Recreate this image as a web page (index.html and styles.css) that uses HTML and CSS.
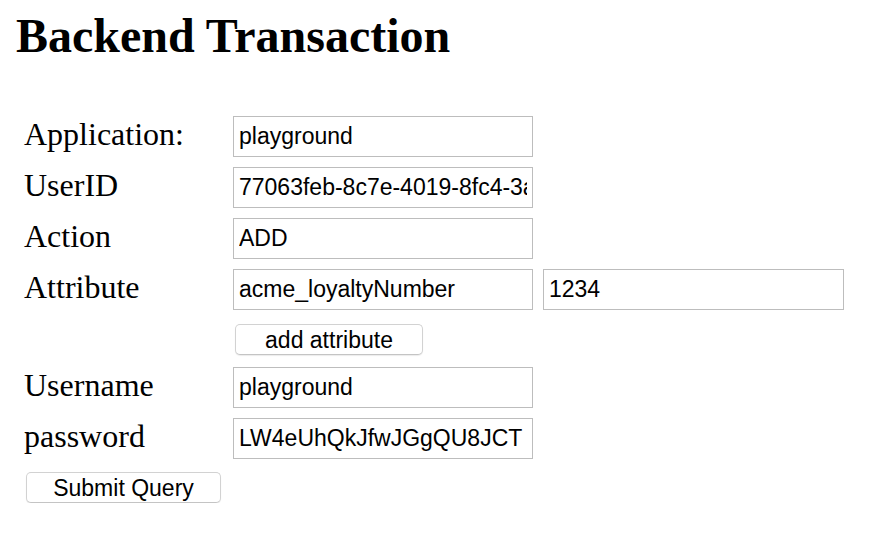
FILE: index.html
```html
<!DOCTYPE html>
<html>
<head>
<meta charset="utf-8">
<link rel="stylesheet" href="styles.css">
</head>
<body>
<h1 class="title">Backend Transaction</h1>
<form class="form">
  <div class="row">
    <label class="label">Application:</label>
    <input class="field" type="text" value="playground">
  </div>
  <div class="row">
    <label class="label">UserID</label>
    <input class="field" type="text" value="77063feb-8c7e-4019-8fc4-3a1b2c9d0e5f">
  </div>
  <div class="row">
    <label class="label">Action</label>
    <input class="field" type="text" value="ADD">
  </div>
  <div class="row">
    <label class="label">Attribute</label>
    <input class="field" type="text" value="acme_loyaltyNumber">
    <input class="field field-wide" type="text" value="1234">
  </div>
  <div class="row row-button">
    <span class="label"></span>
    <button class="btn btn-add" type="button">add attribute</button>
  </div>
  <div class="row">
    <label class="label">Username</label>
    <input class="field" type="text" value="playground">
  </div>
  <div class="row">
    <label class="label">password</label>
    <input class="field" type="text" value="LW4eUhQkJfwJGgQU8JCT">
  </div>
  <div class="row row-submit">
    <button class="btn btn-submit" type="submit">Submit Query</button>
  </div>
</form>
</body>
</html>
```
FILE: styles.css
```css
html, body {
  margin: 0;
  padding: 0;
  background: #ffffff;
}
body {
  font-family: "Liberation Serif", "Times New Roman", serif;
  color: #000;
}
.title {
  margin: 9px 0 0 16px;
  font-size: 48px;
  font-weight: bold;
  line-height: 53px;
}
.form {
  margin: 54px 0 0 24px;
  display: flex;
  flex-direction: column;
  gap: 10px;
}
.row {
  display: flex;
  align-items: center;
  gap: 10px;
}
.label {
  width: 199px;
  flex: none;
  font-size: 32px;
  line-height: 36px;
  padding-bottom: 5px;
}
.field {
  box-sizing: border-box;
  width: 300px;
  height: 41px;
  margin: 0;
  padding: 0 5px;
  border: 1px solid #bdbdbd;
  border-radius: 0;
  font-family: "Liberation Sans", Arial, sans-serif;
  font-size: 23px;
  color: #000;
  background: #fff;
  outline: none;
}
.field-wide {
  width: 301px;
}
.row-button {
  margin-top: 4px;
  margin-bottom: 2px;
}
.row-submit {
  margin-top: 3px;
}
.btn {
  box-sizing: border-box;
  height: 31px;
  margin: 0;
  padding: 0;
  background: #ffffff;
  border: 1px solid #d2d2d2;
  border-bottom-color: #c4c4c4;
  border-radius: 5px;
  box-shadow: 0 1px 1px rgba(0, 0, 0, 0.08);
  font-family: "Liberation Sans", Arial, sans-serif;
  font-size: 23px;
  line-height: 28px;
  color: #000;
}
.btn-add {
  width: 188px;
  margin-left: 2px;
}
.btn-submit {
  width: 195px;
  margin-left: 2px;
}
```
